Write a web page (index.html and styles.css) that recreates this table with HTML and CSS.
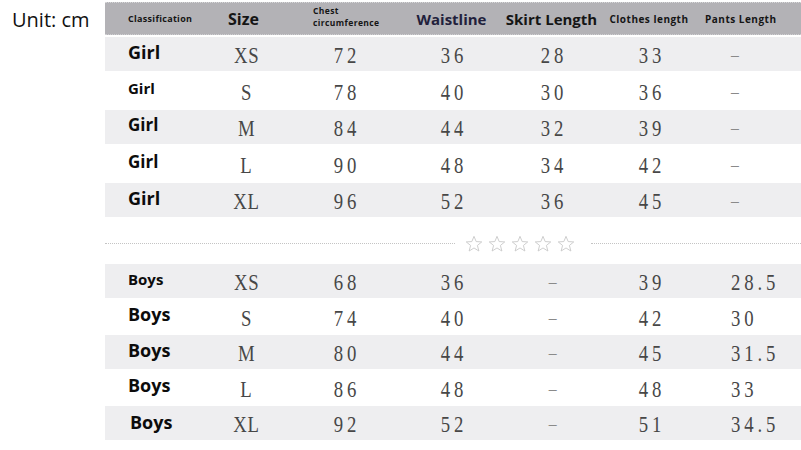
FILE: index.html
```html
<!DOCTYPE html>
<html>
<head>
<meta charset="utf-8">
<link rel="stylesheet" href="styles.css">
</head>
<body>
<div class="page">
  <div class="unit">Unit: cm</div>
  <div class="chart">
    <div class="row head">
      <div class="h h-class">Classification</div>
      <div class="h h-size">Size</div>
      <div class="h h-chest">Chest<br>circumference</div>
      <div class="h h-big h-waist">Waistline</div>
      <div class="h h-big">Skirt Length</div>
      <div class="h h-mid">Clothes length</div>
      <div class="h h-mid h-pants">Pants Length</div>
    </div>

    <div class="group">
      <div class="row gray"><div class="cls c18">Girl</div><div class="v sz">XS</div><div class="v">72</div><div class="v">36</div><div class="v">28</div><div class="v">33</div><div class="v p dash">–</div></div>
      <div class="row white"><div class="cls c15">Girl</div><div class="v sz">S</div><div class="v">78</div><div class="v">40</div><div class="v">30</div><div class="v">36</div><div class="v p dash">–</div></div>
      <div class="row gray"><div class="cls c17">Girl</div><div class="v sz">M</div><div class="v">84</div><div class="v">44</div><div class="v">32</div><div class="v">39</div><div class="v p dash">–</div></div>
      <div class="row white"><div class="cls c17">Girl</div><div class="v sz">L</div><div class="v">90</div><div class="v">48</div><div class="v">34</div><div class="v">42</div><div class="v p dash">–</div></div>
      <div class="row gray"><div class="cls c18">Girl</div><div class="v sz">XL</div><div class="v">96</div><div class="v">52</div><div class="v">36</div><div class="v">45</div><div class="v p dash">–</div></div>
    </div>

    <div class="sep">
      <div class="dots dots-left"></div>
      <div class="stars">
        <svg viewBox="0 0 20 20" class="star"><path d="M10 1.5 L12.4 7.3 L18.6 7.7 L13.8 11.6 L15.4 17.8 L10 14.4 L4.6 17.8 L6.2 11.6 L1.4 7.7 L7.6 7.3 Z"/></svg>
        <svg viewBox="0 0 20 20" class="star"><path d="M10 1.5 L12.4 7.3 L18.6 7.7 L13.8 11.6 L15.4 17.8 L10 14.4 L4.6 17.8 L6.2 11.6 L1.4 7.7 L7.6 7.3 Z"/></svg>
        <svg viewBox="0 0 20 20" class="star"><path d="M10 1.5 L12.4 7.3 L18.6 7.7 L13.8 11.6 L15.4 17.8 L10 14.4 L4.6 17.8 L6.2 11.6 L1.4 7.7 L7.6 7.3 Z"/></svg>
        <svg viewBox="0 0 20 20" class="star"><path d="M10 1.5 L12.4 7.3 L18.6 7.7 L13.8 11.6 L15.4 17.8 L10 14.4 L4.6 17.8 L6.2 11.6 L1.4 7.7 L7.6 7.3 Z"/></svg>
        <svg viewBox="0 0 20 20" class="star"><path d="M10 1.5 L12.4 7.3 L18.6 7.7 L13.8 11.6 L15.4 17.8 L10 14.4 L4.6 17.8 L6.2 11.6 L1.4 7.7 L7.6 7.3 Z"/></svg>
      </div>
      <div class="dots dots-right"></div>
    </div>

    <div class="group boys">
      <div class="row gray"><div class="cls c15">Boys</div><div class="v sz">XS</div><div class="v">68</div><div class="v">36</div><div class="v dash">–</div><div class="v">39</div><div class="v p">28.5</div></div>
      <div class="row white"><div class="cls c18">Boys</div><div class="v sz">S</div><div class="v">74</div><div class="v">40</div><div class="v dash">–</div><div class="v">42</div><div class="v p">30</div></div>
      <div class="row gray"><div class="cls c18">Boys</div><div class="v sz">M</div><div class="v">80</div><div class="v">44</div><div class="v dash">–</div><div class="v">45</div><div class="v p">31.5</div></div>
      <div class="row white"><div class="cls c18">Boys</div><div class="v sz">L</div><div class="v">86</div><div class="v">48</div><div class="v dash">–</div><div class="v">48</div><div class="v p">33</div></div>
      <div class="row gray"><div class="cls c18 shift">Boys</div><div class="v sz">XL</div><div class="v">92</div><div class="v">52</div><div class="v dash">–</div><div class="v">51</div><div class="v p">34.5</div></div>
    </div>
  </div>
</div>
</body>
</html>
```

FILE: styles.css
```css
html, body {
  margin: 0;
  padding: 0;
  background: #ffffff;
}

.page {
  display: flex;
  width: 801px;
  height: 450px;
  overflow: hidden;
}

.unit {
  width: 105px;
  flex: none;
  box-sizing: border-box;
  padding: 6px 0 0 12px;
  font-family: "Open Sans", "Noto Sans", sans-serif;
  font-size: 20px;
  line-height: 28px;
  color: #111;
}

.chart {
  flex: 1;
  padding-top: 2px;
}

.row {
  display: grid;
  grid-template-columns: 100px 85px 108px 107px 93px 102px 1fr;
  align-items: center;
}

.head {
  height: 33px;
  background: #b3b2b6;
  border-top: 1px dotted #d6d6d8;
  border-bottom: 1px dotted #cfcfd2;
  box-sizing: border-box;
  margin-bottom: 2px;
  font-family: "Open Sans", "Noto Sans", sans-serif;
  font-weight: 700;
  color: #151515;
}

.h {
  text-align: center;
  white-space: nowrap;
}

.h-class {
  text-align: left;
  padding-left: 23px;
  font-size: 9px;
  letter-spacing: 0.3px;
}

.h-size {
  font-size: 16px;
  padding-right: 8px;
}

.h-chest {
  text-align: left;
  padding-left: 23px;
  font-size: 8.5px;
  line-height: 12px;
  letter-spacing: 0.4px;
  margin-top: -3px;
}

.h-big {
  font-size: 15px;
}

.h-waist {
  color: #221f3c;
}

.h-mid {
  font-size: 10px;
  letter-spacing: 0.5px;
}

.h-pants {
  text-align: left;
  padding-left: 5px;
}

.gray {
  background: #eeeef0;
  height: 34px;
}

.white {
  background: #ffffff;
  height: 39px;
}

.boys .white {
  height: 37px;
}

.cls {
  padding-left: 23px;
  font-family: "Open Sans", "Noto Sans", sans-serif;
  font-weight: 700;
  color: #0c0c0c;
  margin-bottom: 5px;
}

.c15 { font-size: 15px; }
.c17 { font-size: 17px; }
.c18 { font-size: 18px; }
.shift { padding-left: 25px; margin-bottom: 3px; }

.v {
  justify-self: center;
  font-family: "Liberation Serif", "DejaVu Serif", serif;
  font-size: 24px;
  line-height: 28px;
  letter-spacing: 5px;
  margin-right: -5px;
  color: #474747;
  transform: scaleX(0.78);
  margin-top: 2px;
}

.v.sz {
  letter-spacing: 1px;
  margin-right: -1px;
  padding-right: 4px;
}

.v.p {
  justify-self: start;
  margin-left: 31px;
  transform-origin: left center;
}

.dash {
  color: #8a8a8a;
  font-size: 20px;
}

.sep {
  height: 47px;
  display: flex;
  align-items: center;
  padding-top: 6px;
  box-sizing: border-box;
}

.dots {
  height: 0;
  border-top: 1px dotted #c4c4c4;
}

.dots-left {
  width: 350px;
  flex: none;
}

.dots-right {
  flex: 1;
}

.stars {
  display: flex;
  gap: 5px;
  margin: 0 16px 0 10px;
}

.star {
  width: 18px;
  height: 18px;
  fill: none;
  stroke: #c8c8c8;
  stroke-width: 1;
}
```
